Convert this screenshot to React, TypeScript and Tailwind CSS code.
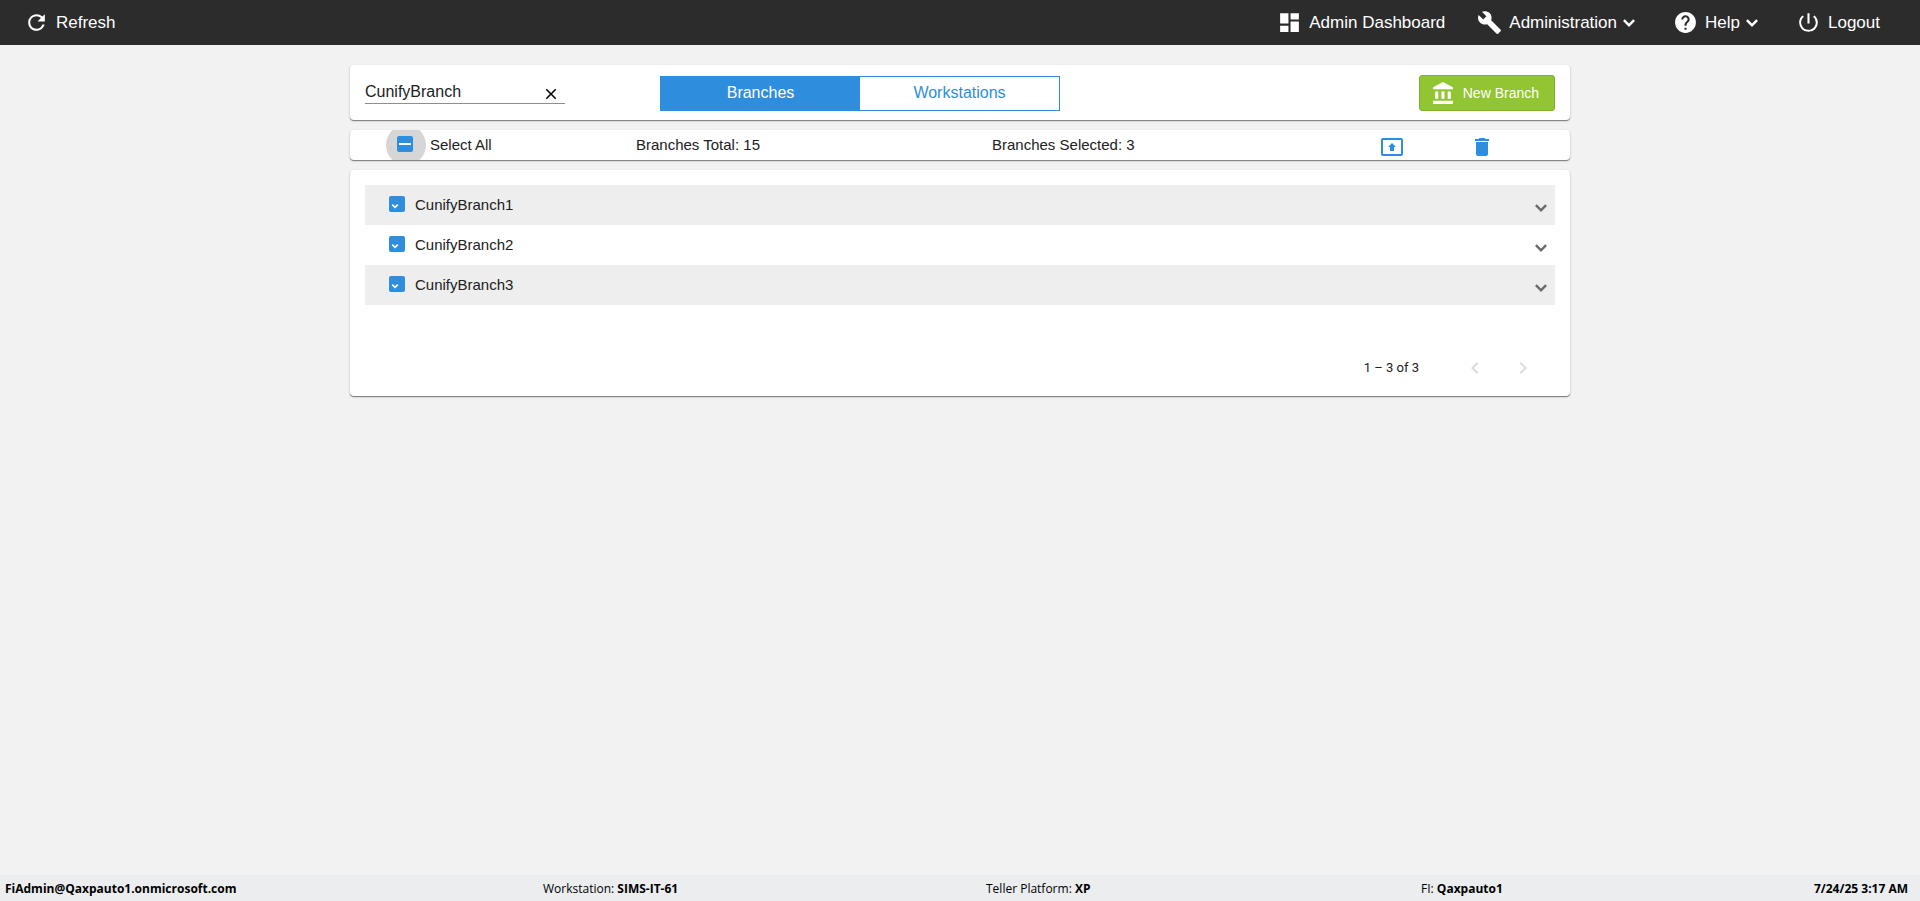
import {useState} from "react";
import {
 MdBuild,
 MdChevronLeft,
 MdChevronRight,
 MdClose,
 MdDashboard,
 MdDelete,
 MdHelp,
 MdPowerSettingsNew,
 MdPresentToAll,
 MdRefresh,
} from "react-icons/md";

const branches = ["CunifyBranch1", "CunifyBranch2", "CunifyBranch3"];
const TOTAL_BRANCHES = 15;

const card =
 "bg-white rounded-[4px] shadow-[0_1px_1px_0_rgba(0,0,0,0.45),0_1px_3px_0_rgba(0,0,0,0.12)]";

const boxClass =
 "block size-4 appearance-none rounded-[2px] border-2 border-gray-500 checked:border-[#2f8ddd] checked:bg-[#2f8ddd]";

const ChevronDown = () => (
 <svg
  viewBox="0 0 24 24"
  className="size-6"
  fill="none"
  stroke="currentColor"
  strokeWidth="2.5">
  <path d="M6.9 9.2l5.1 5.1 5.1-5.1" />
 </svg>
);

const BankIcon = () => (
 <svg viewBox="0 0 24 24" className="size-[25px]" fill="currentColor">
  <path d="M4 10v7h3v-7H4zm6 0v7h3v-7h-3zM2 22h19v-3H2v3zm14-12v7h3v-7h-3zm-4.5-9L2 6v2h19V6l-9.5-5z" />
 </svg>
);

type CheckboxProps = {
 id: string;
 checked: boolean;
 indeterminate?: boolean;
 onChange: () => void;
};

const Checkbox = ({id, checked, indeterminate, onChange}: CheckboxProps) => (
 <span className="relative block size-4 shrink-0">
  <input
   id={id}
   type="checkbox"
   checked={checked || !!indeterminate}
   onChange={onChange}
   className={boxClass}
  />
  {(checked || indeterminate) && (
   <svg
    viewBox="0 0 16 16"
    className="pointer-events-none absolute inset-0 size-4"
    fill="none"
    stroke="#fff"
    strokeWidth="2">
    {indeterminate ? (
     <path d="M2 8h12" />
    ) : (
     <path d="M3.2 8.6l2.8 2.8 2.8-2.8" strokeWidth="1.7" />
    )}
   </svg>
  )}
 </span>
);

const Header = () => (
 <header className="flex h-[45px] shrink-0 items-center bg-[#2c2c2c] pl-6 pr-10 text-[17px] text-white">
  <button type="button" className="flex items-center gap-[7px]">
   <MdRefresh size={25} />
   Refresh
  </button>
  <nav className="ml-auto flex items-center gap-8">
   <a href="#dashboard" className="flex items-center gap-[7px]">
    <MdDashboard size={25} />
    Admin Dashboard
   </a>
   <button type="button" className="flex items-center gap-[7px]">
    <MdBuild size={25} />
    <span className="flex items-center">
     Administration
     <ChevronDown />
    </span>
   </button>
   <button type="button" className="flex items-center gap-[7px]">
    <MdHelp size={25} />
    <span className="flex items-center">
     Help
     <ChevronDown />
    </span>
   </button>
   <button type="button" className="flex items-center gap-[7px]">
    <MdPowerSettingsNew size={25} />
    Logout
   </button>
  </nav>
 </header>
);

const Footer = () => (
 <footer className="grid h-[26px] shrink-0 grid-cols-[538fr_443fr_435fr_383fr_104fr] items-center bg-[#ebedef] pl-[5px] pr-3 pt-px font-['Open_Sans','Noto_Sans',sans-serif] text-xs text-black">
  <b>FiAdmin@Qaxpauto1.onmicrosoft.com</b>
  <span>
   Workstation: <b>SIMS-IT-61</b>
  </span>
  <span>
   Teller Platform: <b>XP</b>
  </span>
  <span>
   FI: <b>Qaxpauto1</b>
  </span>
  <b className="text-right">7/24/25 3:17 AM</b>
 </footer>
);

const App = () => {
 const [search, setSearch] = useState("CunifyBranch");
 const [tab, setTab] = useState("branches");
 const [selected, setSelected] = useState<string[]>(branches);

 const toggle = (name: string) =>
  setSelected((prev) =>
   prev.includes(name) ? prev.filter((n) => n !== name) : [...prev, name],
  );

 const tabClass = (name: string) =>
  tab === name ? "flex-1 bg-[#2f8ddd] text-white" : "flex-1 text-[#2f8ddd]";

 return (
  <div className="flex min-h-screen flex-col bg-[#f2f2f2] font-['Liberation_Sans',Arial,sans-serif] text-[#212121]">
   <Header />

   <main className="mx-auto flex w-full max-w-[1220px] flex-1 flex-col gap-[10px] pt-5">
    {/* Search, tabs and create button */}
    <section
     className={`${card} grid h-[55px] grid-cols-[295px_400px_1fr] items-center px-[15px] pt-px`}>
     <div className="flex h-[22px] w-[200px] items-center border-b border-[#8f8f8f]">
      <input
       type="text"
       aria-label="Search branches"
       value={search}
       onChange={(e) => setSearch(e.target.value)}
       className="min-w-0 flex-1 bg-transparent pb-[2px] leading-5 outline-none"
      />
      <button
       type="button"
       aria-label="Clear search"
       onClick={() => setSearch("")}
       className="pr-[5px] pt-[3px] text-black">
       <MdClose size={18} />
      </button>
     </div>
     <div className="flex h-[35px] border border-[#2f8ddd]">
      <button
       type="button"
       className={tabClass("branches")}
       onClick={() => setTab("branches")}>
       Branches
      </button>
      <button
       type="button"
       className={tabClass("workstations")}
       onClick={() => setTab("workstations")}>
       Workstations
      </button>
     </div>
     <button
      type="button"
      className="flex h-9 items-center gap-[7px] justify-self-end rounded-[3px] border border-[#7fb02b] bg-[#91c532] pl-[11px] pr-[15px] text-sm text-white">
      <BankIcon />
      New Branch
     </button>
    </section>

    {/* Selection summary */}
    <section
     className={`${card} grid h-[30px] grid-cols-[286fr_356fr_388fr_90fr_100fr] items-center text-[15px]`}>
     <div className="flex h-full items-center overflow-hidden pl-9">
      <span className="-my-2 flex size-10 shrink-0 items-center justify-center rounded-full bg-[#d6d6d6] pb-[2px] pr-[2px]">
       <Checkbox
        id="select-all"
        checked={false}
        indeterminate={selected.length > 0}
        onChange={() => setSelected(selected.length ? [] : branches)}
       />
      </span>
      <label htmlFor="select-all" className="pl-1">
       Select All
      </label>
     </div>
     <span>Branches Total: {TOTAL_BRANCHES}</span>
     <span>Branches Selected: {selected.length}</span>
     <button
      type="button"
      aria-label="Move selected"
      className="justify-self-start pt-1 text-[#2f8ddd]">
      <MdPresentToAll size={24} />
     </button>
     <button
      type="button"
      aria-label="Delete selected"
      className="justify-self-start pt-1 text-[#2f8ddd]">
      <MdDelete size={24} />
     </button>
    </section>

    {/* Branch list */}
    <section className={`${card} px-[15px] pb-1 pt-[15px]`}>
     <ul>
      {branches.map((name) => (
       <li
        key={name}
        className="flex h-10 items-center pl-6 pr-[2px] text-[15px] odd:bg-[#eee]">
        <span className="pb-[2px]">
         <Checkbox
          id={name}
          checked={selected.includes(name)}
          onChange={() => toggle(name)}
         />
        </span>
        <label htmlFor={name} className="pl-[10px]">
         {name}
        </label>
        <button
         type="button"
         aria-label={`Expand ${name}`}
         className="ml-auto pt-[6px] text-[#6b6b6b]">
         <ChevronDown />
        </button>
       </li>
      ))}
     </ul>
     <div className="mt-[39px] flex h-12 items-center justify-end pr-2 font-[Roboto,sans-serif] text-[13px]">
      <span className="mr-8">1 – 3 of 3</span>
      <button
       type="button"
       aria-label="Previous page"
       disabled
       className="flex size-12 items-center justify-center text-[#dcdcdc]">
       <MdChevronLeft size={24} />
      </button>
      <button
       type="button"
       aria-label="Next page"
       disabled
       className="flex size-12 items-center justify-center text-[#dcdcdc]">
       <MdChevronRight size={24} />
      </button>
     </div>
    </section>
   </main>

   <Footer />
  </div>
 );
};

export default App;
